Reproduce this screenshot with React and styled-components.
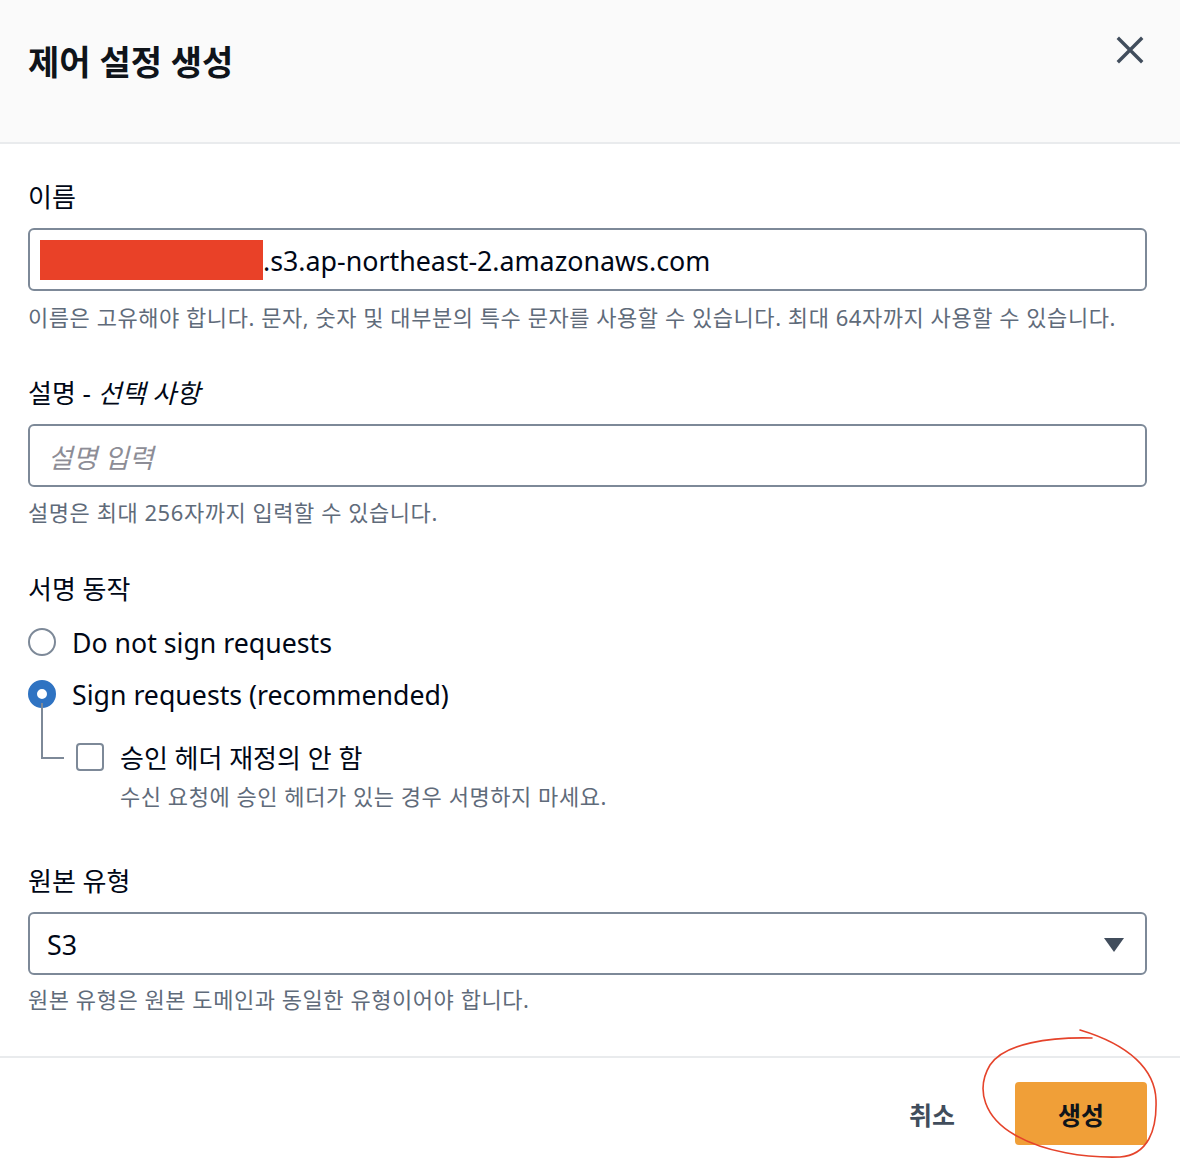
import React from 'react';
import styled, { createGlobalStyle } from 'styled-components';

const GlobalStyle = createGlobalStyle`
  html, body {
    margin: 0;
    padding: 0;
    background: #ffffff;
  }
  body {
    font-family: "Noto Sans", "Noto Sans CJK KR", sans-serif;
    color: #000716;
  }
  * {
    box-sizing: border-box;
  }
`;

const Page = styled.div`
  position: relative;
  width: 1180px;
  min-height: 1164px;
  display: flex;
  flex-direction: column;
  background: #ffffff;
`;

const Header = styled.header`
  height: 144px;
  padding: 40px 34px 0 28px;
  display: flex;
  justify-content: space-between;
  align-items: flex-start;
  background: #fafafa;
  border-bottom: 2px solid #e9ebed;
`;

const Title = styled.h1`
  margin: 0;
  font-size: 34px;
  line-height: 44px;
  font-weight: 700;
  color: #0f141a;
`;

const CloseButton = styled.button`
  width: 32px;
  height: 32px;
  margin-top: -6px;
  padding: 0;
  border: none;
  background: none;
  display: flex;
  align-items: center;
  justify-content: center;
  color: #414d5c;
  cursor: pointer;
`;

const Body = styled.main`
  padding: 37px 33px 42px 28px;
  display: flex;
  flex-direction: column;
`;

const Field = styled.section`
  display: flex;
  flex-direction: column;
  margin-bottom: ${(p) => p.gap ?? 45}px;
`;

const Label = styled.label`
  font-size: 26px;
  line-height: 32px;
  color: #000716;
  margin-bottom: ${(p) => p.below ?? 15}px;
  em {
    font-style: italic;
  }
`;

const InputBox = styled.div`
  height: 63px;
  border: 2px solid #7d8998;
  border-radius: 6px;
  display: flex;
  align-items: center;
  padding-left: ${(p) => p.indent ?? 10}px;
  padding-right: 20px;
  padding-top: 2px;
  font-size: 26.8px;
  color: ${(p) => (p.muted ? '#8d8d96' : '#000716')};
  font-style: ${(p) => (p.muted ? 'italic' : 'normal')};
  justify-content: space-between;
`;

const Redacted = styled.span`
  display: inline-block;
  width: 223px;
  height: 40px;
  margin-top: -2px;
  background: #e94128;
`;

const Value = styled.span`
  display: flex;
  align-items: center;
`;

const Hint = styled.div`
  margin-top: ${(p) => p.top ?? 11}px;
  font-size: 22px;
  line-height: 30px;
  letter-spacing: 0.55px;
  color: #5f6b7a;
  padding-left: ${(p) => p.indent ?? 0}px;
`;

const RadioRow = styled.div`
  display: flex;
  align-items: center;
  gap: 16px;
  height: 36px;
  margin-top: ${(p) => p.top ?? 0}px;
  font-size: 26.7px;
  color: #000716;
`;

const RadioDot = styled.span`
  width: 28px;
  height: 28px;
  border-radius: 50%;
  flex: none;
  border: ${(p) => (p.checked ? '9px solid #2f73c2' : '2px solid #7d8998')};
  background: #ffffff;
`;

const SubOption = styled.div`
  position: relative;
  margin-top: 27px;
  padding-left: 48px;
  &::before {
    content: '';
    position: absolute;
    left: 13px;
    top: -36px;
    width: 21px;
    height: 54px;
    border-left: 2px solid #7d8998;
    border-bottom: 2px solid #7d8998;
  }
`;

const CheckRow = styled.div`
  display: flex;
  align-items: center;
  gap: 16px;
  height: 36px;
  font-size: 26px;
  color: #000716;
`;

const CheckBox = styled.span`
  width: 28px;
  height: 28px;
  flex: none;
  border: 2px solid #7d8998;
  border-radius: 4px;
  background: #ffffff;
`;

const Footer = styled.footer`
  border-top: 2px solid #e9ebed;
  padding: 24px 33px 17px 28px;
  display: flex;
  justify-content: flex-end;
  align-items: center;
  gap: 40px;
`;

const TextButton = styled.button`
  border: none;
  background: none;
  padding: 0 20px;
  height: 63px;
  font-family: inherit;
  font-size: 25px;
  font-weight: 700;
  color: #414d5c;
  cursor: pointer;
`;

const PrimaryButton = styled.button`
  width: 132px;
  height: 63px;
  border: none;
  border-radius: 4px;
  background: #f09f38;
  font-family: inherit;
  font-size: 25px;
  font-weight: 700;
  color: #0f141a;
  cursor: pointer;
`;

const Annotation = styled.svg`
  position: absolute;
  left: 0;
  top: 0;
  pointer-events: none;
`;

const CloseIcon = () => (
  <svg width="28" height="28" viewBox="0 0 28 28">
    <path d="M3 3 L25 25 M25 3 L3 25" stroke="currentColor" strokeWidth="3.4" strokeLinecap="square" fill="none" />
  </svg>
);

const Caret = () => (
  <svg width="22" height="16" viewBox="0 0 22 16">
    <path d="M1 1 H21 L11 15 Z" fill="#414d5c" />
  </svg>
);

export default function App() {
  return (
    <Page>
      <GlobalStyle />
      <Header>
        <Title>제어 설정 생성</Title>
        <CloseButton aria-label="닫기">
          <CloseIcon />
        </CloseButton>
      </Header>

      <Body>
        <Field>
          <Label>이름</Label>
          <InputBox>
            <Value>
              <Redacted />
              .s3.ap-northeast-2.amazonaws.com
            </Value>
          </InputBox>
          <Hint>이름은 고유해야 합니다. 문자, 숫자 및 대부분의 특수 문자를 사용할 수 있습니다. 최대 64자까지 사용할 수 있습니다.</Hint>
        </Field>

        <Field gap={46}>
          <Label>
            설명 - <em>선택 사항</em>
          </Label>
          <InputBox muted indent={18}>
            설명 입력
          </InputBox>
          <Hint top={10}>설명은 최대 256자까지 입력할 수 있습니다.</Hint>
        </Field>

        <Field gap={54}>
          <Label below={19}>서명 동작</Label>
          <RadioRow>
            <RadioDot />
            Do not sign requests
          </RadioRow>
          <RadioRow top={16}>
            <RadioDot checked />
            Sign requests (recommended)
          </RadioRow>
          <SubOption>
            <CheckRow>
              <CheckBox />
              승인 헤더 재정의 안 함
            </CheckRow>
            <Hint top={6} indent={44}>
              수신 요청에 승인 헤더가 있는 경우 서명하지 마세요.
            </Hint>
          </SubOption>
        </Field>

        <Field gap={0}>
          <Label>원본 유형</Label>
          <InputBox indent={17}>
            <Value>S3</Value>
            <Caret />
          </InputBox>
          <Hint top={9}>원본 유형은 원본 도메인과 동일한 유형이어야 합니다.</Hint>
        </Field>
      </Body>

      <Footer>
        <TextButton>취소</TextButton>
        <PrimaryButton>생성</PrimaryButton>
      </Footer>

      <Annotation width="1180" height="1164" viewBox="0 0 1180 1164">
        <path
          d="M1092 1038 C1050 1037 1005 1043 990 1065 C975 1090 985 1118 1015 1135 C1045 1152 1085 1158 1120 1157 C1148 1155 1157 1130 1156 1100 C1155 1070 1130 1045 1080 1030"
          fill="none"
          stroke="#e5432b"
          strokeWidth="1.6"
          strokeLinecap="round"
        />
      </Annotation>
    </Page>
  );
}
